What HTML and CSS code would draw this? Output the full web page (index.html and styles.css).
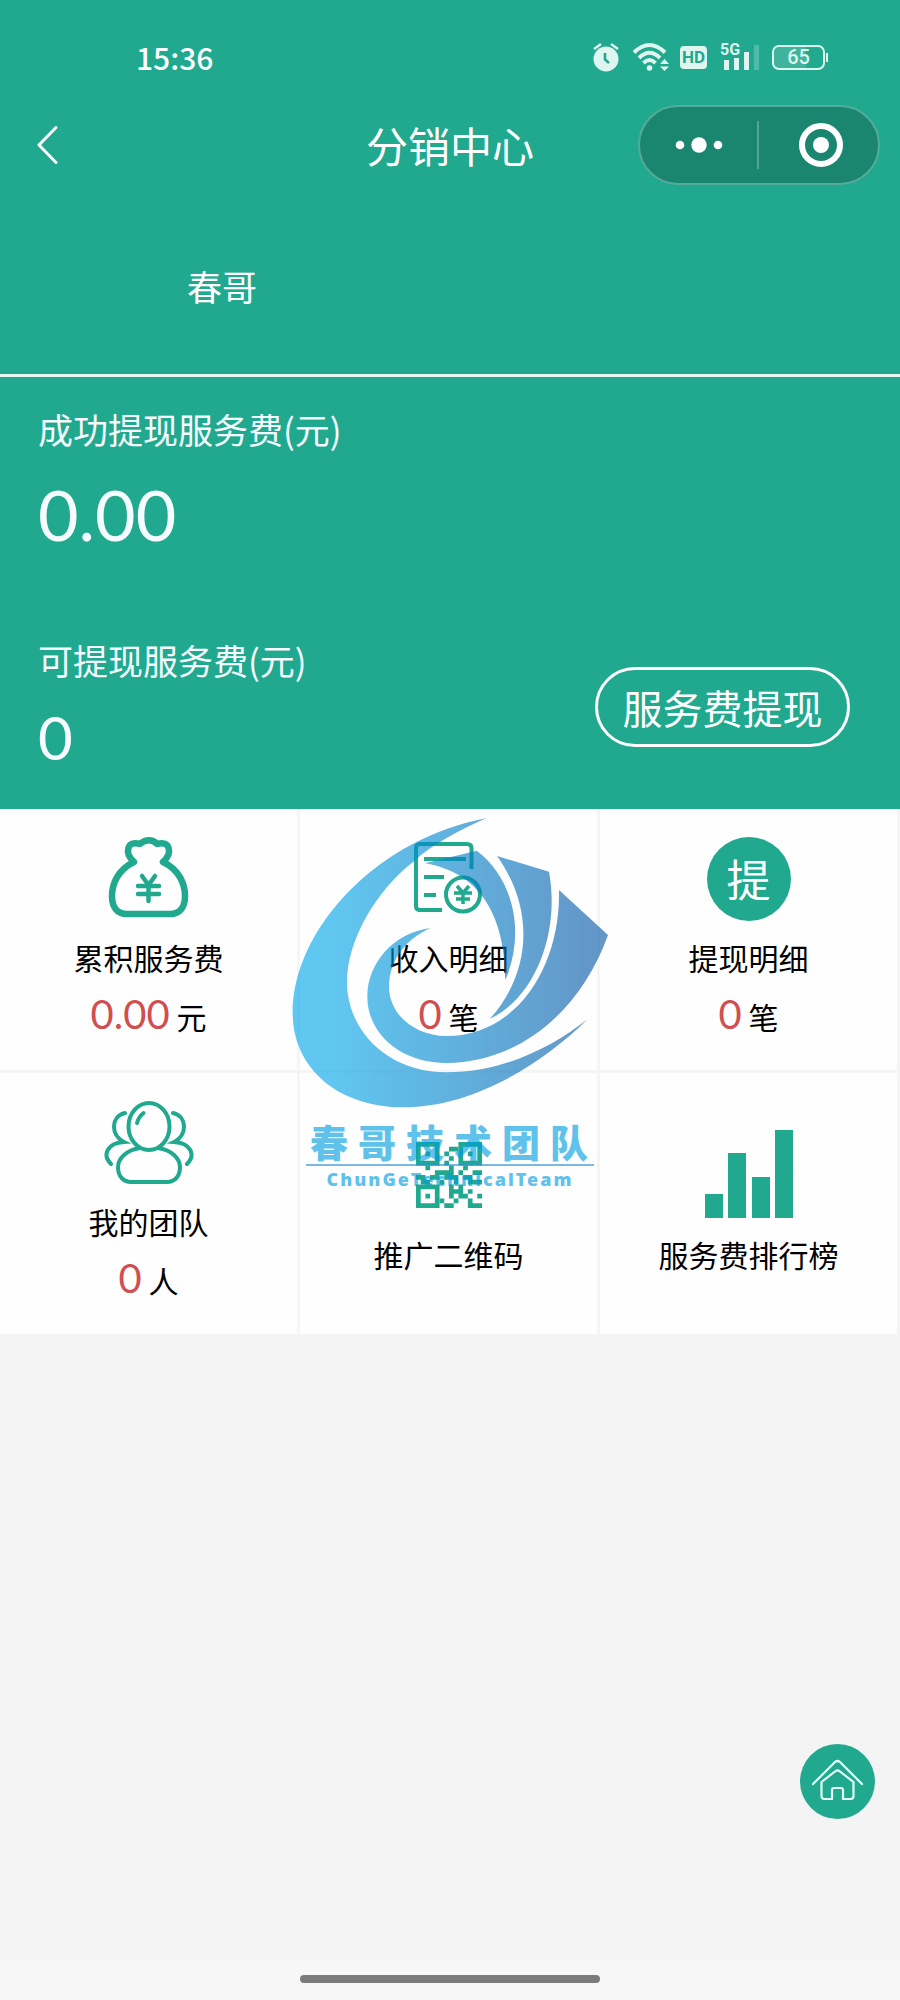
FILE: index.html
```html
<!DOCTYPE html>
<html lang="zh-CN">
<head>
    <meta charset="UTF-8">
    <meta name="viewport" content="width=device-width, initial-scale=1.0">
    <title>分销中心</title>
    <link rel="stylesheet" href="styles.css">
</head>
<body>
    <header class="header">
        <div class="status-bar">
            <span class="time">15:36</span>
            <div class="status-icons">
                <svg width="28" height="30" viewBox="0 0 28 30">
                    <circle cx="14" cy="17" r="12.5" fill="#dff5ef"/>
                    <path d="M2 7L9 2M26 7L19 2" stroke="#dff5ef" stroke-width="2.6"/>
                    <path d="M13 11V17.500L17 21" fill="none" stroke="#20a98e" stroke-width="2.600"/>
                </svg>
                <svg class="wifi" width="38" height="30" viewBox="0 0 38 30">
                    <g fill="none" stroke="#dff5ef" stroke-width="4">
                        <path d="M2 10.500Q17.500 -4.500 33 10.500"/>
                        <path d="M7 16Q17.500 5.500 28 16"/>
                        <path d="M11.500 21Q17.500 15 23.500 21"/>
                    </g>
                    <circle cx="17.500" cy="26" r="2.800" fill="#dff5ef"/>
                    <path d="M28 22L32.500 17L37 22ZM28 24.500L32.500 29L37 24.500Z" fill="#dff5ef"/>
                </svg>
                <span class="hd">HD</span>
                <svg class="signal" width="40" height="38" viewBox="0 -4 40 38">
                    <text x="0" y="13" class="signal-text">5G</text>
                    <path d="M4 18H9V28H4ZM14 16H19V28H14ZM24 10H29V28H24Z" fill="#dff5ef"/>
                    <path d="M34 3H39V28H34Z" fill="#dff5ef" opacity=".25"/>
                </svg>
                <span class="battery">65</span>
            </div>
        </div>

        <nav class="nav">
            <a href="#" class="back" aria-label="返回">
                <svg width="24" height="40" viewBox="0 0 24 40">
                    <path d="M20 2.500L3 20L20 37.500" fill="none" stroke="#fff" stroke-width="3" stroke-linecap="round" stroke-linejoin="round"/>
                </svg>
            </a>
            <h1>分销中心</h1>
            <div class="capsule">
                <button type="button" aria-label="更多">
                    <svg width="48" height="16" viewBox="0 0 48 16" fill="#fff">
                        <circle cx="5" cy="8" r="4.300"/>
                        <circle cx="24" cy="8" r="7.700"/>
                        <circle cx="43" cy="8" r="4.300"/>
                    </svg>
                </button>
                <button type="button" aria-label="关闭">
                    <svg width="46" height="46" viewBox="0 0 46 46">
                        <circle cx="24" cy="23" r="19" fill="none" stroke="#fff" stroke-width="6"/>
                        <circle cx="24" cy="23" r="8" fill="#fff"/>
                    </svg>
                </button>
            </div>
        </nav>

        <div class="user">春哥</div>
    </header>

    <section class="money">
        <p class="money-label">成功提现服务费(元)</p>
        <p class="money-total">0.00</p>
        <div class="money-row">
            <div>
                <p class="money-label">可提现服务费(元)</p>
                <p class="money-rest">0</p>
            </div>
            <button type="button" class="withdraw">服务费提现</button>
        </div>
    </section>

    <main class="menu">
        <a href="#" class="item">
            <svg class="icon" viewBox="0 0 84 84" fill="none" stroke="#20a98e">
                <path d="M27 25C17 16 20 3 33 7C38 2 46 2 50 7C63 3 66 16 56 25C73 33 78 48 78 59C78 70 73 77 63 77H20C10 77 5 70 5 59C5 48 10 33 27 25Z" stroke-width="6.500" stroke-linejoin="round"/>
                <path d="M35 39L41.500 48L48 39M31 49H52M31 57H52M41.500 48V64" stroke-width="4.500" stroke-linecap="round"/>
            </svg>
            <span class="name">累积服务费</span>
            <span class="count"><b>0.00</b> 元</span>
        </a>
        <a href="#" class="item">
            <svg class="icon" viewBox="0 0 84 84" fill="none" stroke="#20a98e" stroke-width="4">
                <path d="M35 73H13Q9 73 9 69V11Q9 7 13 7H60Q64.500 7 64.500 11V32M17 22H59M17 40H37M17 58H29"/>
                <circle cx="56" cy="57.500" r="17"/>
                <path d="M50 49L56 56L62 49M47 56H65M49 62H63M56 56V67" stroke-width="3.500"/>
            </svg>
            <span class="name">收入明细</span>
            <span class="count"><b>0</b> 笔</span>
        </a>
        <a href="#" class="item">
            <span class="icon round">提</span>
            <span class="name">提现明细</span>
            <span class="count"><b>0</b> 笔</span>
        </a>
        <a href="#" class="item">
            <svg class="icon wide" viewBox="0 0 90 84" fill="none" stroke="#20a98e" stroke-width="4" stroke-linecap="round">
                <ellipse cx="45" cy="25.500" rx="20.500" ry="23.500"/>
                <path d="M33 22Q34.500 16 39.500 12"/>
                <path d="M36 47C22 49 14 58 14 66C14 76 20 81 27 81H63C71 81 76 75 76 66C76 58 68 49 54 47"/>
                <path d="M21 12C7 15 6 34 20 41C3 42 -2 54 7 63"/>
                <path d="M69 12C83 15 84 34 70 41C87 42 92 54 83 63"/>
            </svg>
            <span class="name">我的团队</span>
            <span class="count"><b>0</b> 人</span>
        </a>
        <a href="#" class="item short">
            <svg class="icon qr" viewBox="0 0 14 14" fill="#20a98e">
                <path fill-rule="evenodd" d="M0 0H5V5H0ZM1 1V4H4V1ZM9 0H14V5H9ZM10 1V4H13V1ZM0 9H5V14H0ZM1 10V13H4V10Z"/>
                <path d="M2 2H3V3H2ZM11 2H12V3H11ZM2 11H3V12H2ZM7 1H9V2H7ZM6 2H7V3H6ZM7 3H8V4H7ZM6 4H7V5H6ZM2 5H3V6H2ZM10 5H11V6H10ZM7 5H8V6H7ZM4 6H8V7H4ZM9 6H10V7H9ZM12 6H14V7H12ZM0 7H2V8H0ZM3 7H5V8H3ZM6 7H9V8H6ZM10 7H12V8H10ZM1 8H3V9H1ZM5 8H6V9H5ZM8 8H9V9H8ZM11 8H14V9H11ZM7 9H8V12H7ZM8 10H9V11H8ZM9 9H10V12H9ZM10 11H11V12H10ZM11 10H12V11H11ZM5 12H6V13H5ZM8 12H9V13H8ZM6 13H8V14H6ZM13 11H14V12H13ZM11 12H12V13H11ZM11 13H14V14H11Z"/>
            </svg>
            <span class="name">推广二维码</span>
        </a>
        <a href="#" class="item short">
            <svg class="icon chart" viewBox="0 0 88 88" fill="#20a98e">
                <path d="M0 64H18V88H0ZM23 23H41V88H23ZM47 47H65V88H47ZM70 0H88V88H70Z"/>
            </svg>
            <span class="name">服务费排行榜</span>
        </a>

        <!-- watermark over the menu -->
        <div class="watermark">
            <svg class="watermark-logo" viewBox="0 0 1080 960">
                <defs>
                    <linearGradient id="wave" gradientUnits="userSpaceOnUse" x1="180" y1="0" x2="960" y2="0">
                        <stop offset="0" stop-color="#00a7ea"/>
                        <stop offset="1" stop-color="#0459a8"/>
                    </linearGradient>
                </defs>
                <g fill="url(#wave)">
                    <path d="M650 54C560 72 490 100 440 126C240 225 68 430 68 640C68 800 200 922 400 922C620 922 830 780 952 658C850 740 700 817 530 817C350 817 231 690 231 545C231 420 320 270 430 185C490 130 570 90 650 54Z"/>
                    <path d="M482 384C370 398 292 490 292 590C292 700 390 789 530 789C740 789 930 640 1014 405L867 270C872 500 740 708 530 708C430 708 357 640 357 560C357 480 410 415 482 384Z"/>
                    <path d="M681 168L837 215C870 390 800 590 660 656C790 510 790 320 681 168Z"/>
                    <path d="M465 190L620 152C725 230 770 390 706 540C705 360 640 220 465 190Z"/>
                </g>
            </svg>
            <div class="watermark-title">春哥技术团队</div>
            <div class="watermark-sub">ChunGeTechnicalTeam</div>
        </div>
    </main>

    <a href="#" class="home" aria-label="首页">
        <svg width="75" height="75" viewBox="0 0 75 75" fill="none" stroke="#e6fff9" stroke-width="2.200" stroke-linecap="round" stroke-linejoin="round">
            <path d="M13 40L35 18Q37.500 16 40 18L62 40"/>
            <path d="M21.500 38L35 27.500Q37.500 25.500 40 27.500L53.500 38V52Q53.500 55 50.500 55H43V46Q43 44 41 44H34Q32 44 32 46V55H24.500Q21.500 55 21.500 52Z"/>
        </svg>
    </a>
    <footer class="bottom-bar"><span></span></footer>
</body>
</html>
```

FILE: styles.css
```css
* {
    box-sizing: border-box;
}
body {
    font-family: "Noto Sans CJK SC", sans-serif;
    background-color: #f4f4f4;
    color: #000;
    display: flex;
    flex-direction: column;
    min-height: 100vh;
    margin: 0;
}
h1, p {
    margin: 0;
    font-weight: 400;
}
a {
    color: inherit;
    text-decoration: none;
}
button {
    font-family: inherit;
    color: #fff;
    background: none;
    border: none;
    padding: 0;
    cursor: pointer;
}
svg {
    display: block;
}

/* header */
.header {
    background-color: #20a98e;
    color: #fff;
    border-bottom: 3px solid #e9f7f4;
}
.status-bar {
    display: flex;
    justify-content: space-between;
    align-items: center;
    height: 92px;
    padding: 22px 70px 0 136px;
}
.time {
    font-size: 30px;
    font-weight: 500;
}
.status-icons {
    display: flex;
    align-items: center;
    color: #dff5ef;
}
.wifi {
    margin-left: 12px;
}
.hd {
    width: 27px;
    height: 23px;
    margin-left: 10px;
    border-radius: 4px;
    background: #dff5ef;
    color: #20a98e;
    font: 700 17px/23px Roboto, sans-serif;
    text-align: center;
}
.signal {
    margin-left: 13px;
}
.signal-text {
    font: 700 16px Roboto, sans-serif;
    fill: #dff5ef;
}
.battery {
    position: relative;
    width: 53px;
    height: 25px;
    margin: 0 5px 0 12px;
    border: 2px solid #dff5ef;
    border-radius: 7px;
    background: linear-gradient(to right, #3fb39b 65%, transparent 65%) content-box;
    font: 500 20px/21px Roboto, sans-serif;
    text-align: center;
}
.battery::after {
    content: "";
    position: absolute;
    right: -5px;
    top: 6px;
    width: 2px;
    height: 9px;
    background: #dff5ef;
}
.nav {
    display: grid;
    grid-template-columns: 1fr auto 1fr;
    align-items: center;
    height: 106px;
    padding: 0 20px 0 36px;
}
.nav h1 {
    font-size: 42px;
    line-height: 60px;
    margin-right: 16px;
}
.back {
    justify-self: start;
}
.capsule {
    justify-self: end;
    display: flex;
    align-items: center;
    width: 242px;
    height: 80px;
    border: 2px solid #55ab99;
    border-radius: 40px;
    background: #1b8670;
}
.capsule button {
    flex: 1;
    display: flex;
    justify-content: center;
    align-items: center;
    height: 48px;
}
.capsule button + button {
    padding-left: 2px;
    border-left: 2px solid #55a594;
}
.user {
    height: 176px;
    padding-left: 187px;
    font-size: 35px;
    line-height: 176px;
}

/* money */
.money {
    background-color: #20a98e;
    color: #f5fbff;
    padding: 30px 50px 33px 38px;
}
.money-label {
    font-size: 35px;
    line-height: 44px;
}
.money-total {
    margin: 23px 0 84px;
    font-family: Lato, sans-serif;
    font-size: 70px;
    line-height: 80px;
}
.money-row {
    display: flex;
    justify-content: space-between;
    align-items: center;
}
.money-rest {
    margin: 20px 0 4px;
    font-family: Lato, sans-serif;
    font-size: 60px;
    line-height: 70px;
}
.withdraw {
    width: 255px;
    height: 80px;
    border: 3px solid #fff;
    border-radius: 40px;
    font-size: 40px;
}

/* menu */
.menu {
    position: relative;
    display: grid;
    grid-template-columns: repeat(3, 1fr);
}
.item {
    display: flex;
    flex-direction: column;
    align-items: center;
    height: 264px;
    padding-top: 28px;
    background: #fefefe;
    border-right: 3px solid #f5f5f5;
    border-bottom: 3px solid #f5f5f5;
}
.item.short {
    padding-top: 57px;
}
.icon {
    width: 84px;
    height: 84px;
}
.wide {
    width: 90px;
}
.round {
    border-radius: 50%;
    background: #20a98e;
    color: #fff;
    font-size: 44px;
    line-height: 82px;
    text-align: center;
}
.qr {
    width: 66px;
    height: 66px;
    margin: 12px 0 10px;
}
.chart {
    width: 88px;
    height: 88px;
}
.name {
    margin-top: 14px;
    font-size: 30px;
    line-height: 44px;
}
.count {
    margin-top: 7px;
    font-size: 30px;
    line-height: 56px;
}
.count b {
    color: #d05050;
    font-family: Lato, sans-serif;
    font-size: 40px;
    font-weight: 400;
}

.watermark {
    position: absolute;
    top: -9px;
    left: 50%;
    width: 360px;
    margin-left: -180px;
    opacity: 0.62;
    color: #009de0;
    text-align: center;
    pointer-events: none;
}
.watermark-logo {
    width: 360px;
    height: 320px;
}
.watermark-title {
    margin: 0 36px;
    padding-bottom: 2px;
    border-bottom: 2px solid #2a8fd8;
    font-size: 38px;
    font-weight: 900;
    line-height: 42px;
    letter-spacing: 10px;
    text-indent: 4px;
    white-space: nowrap;
}
.watermark-sub {
    font: 900 18px/26px "Noto Sans", sans-serif;
    letter-spacing: 2px;
}

.home {
    align-self: flex-end;
    width: 75px;
    height: 75px;
    margin: auto 25px 141px 0;
    border-radius: 50%;
    background: #20a98e;
}
.bottom-bar {
    display: flex;
    justify-content: center;
    height: 40px;
    padding-top: 15px;
    background: #f7f7f7;
}
.bottom-bar span {
    width: 33.33%;
    height: 8px;
    border-radius: 4px;
    background: #7b7b7b;
}
```
